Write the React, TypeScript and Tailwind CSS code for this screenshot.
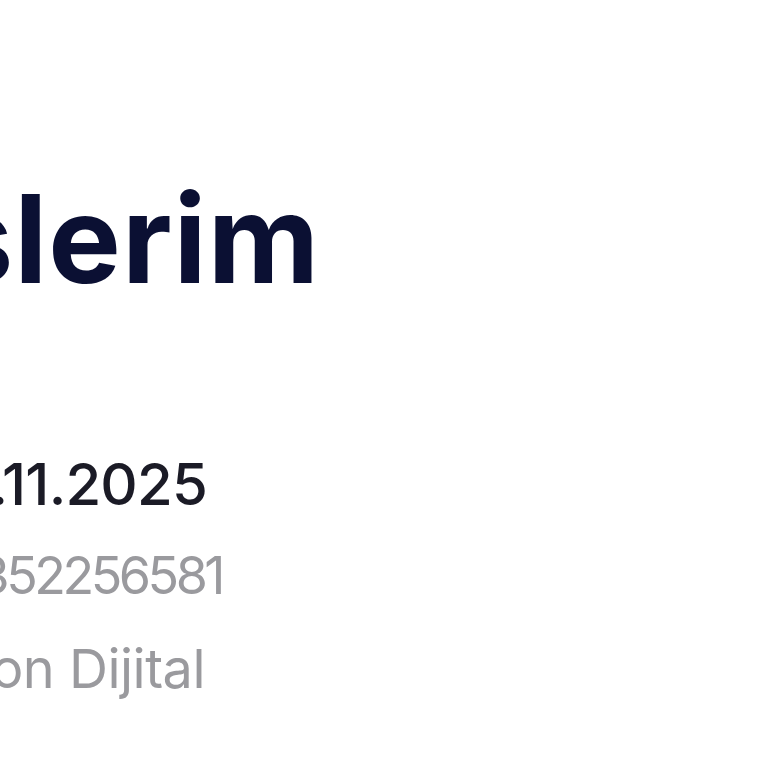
export default function App() {
  return (
    <div className="w-[768px] h-[768px] bg-white overflow-hidden" style={{ fontFamily: "Inter, 'Noto Sans', sans-serif" }}>
      <div className="flex flex-col pt-[178px]">
        <div className="w-[320px] flex justify-end">
          <h1 className="whitespace-nowrap text-[122px] leading-none font-bold text-[#0b1033] tracking-[1px]">Siparişlerim</h1>
        </div>
        <div className="w-[207px] flex justify-end mt-[155px]">
          <span className="whitespace-nowrap text-[58px] leading-none font-medium text-[#1b1b26] tracking-[-0.8px]">Tarih: 12.11.2025</span>
        </div>
        <div className="w-[222px] flex justify-end mt-[37px]">
          <span className="whitespace-nowrap text-[52px] leading-none text-[#9a9a9e] tracking-[-3.5px]">No: 4352256581</span>
        </div>
        <div className="w-[205px] flex justify-end mt-[40px]">
          <span className="whitespace-nowrap text-[54px] leading-none text-[#9a9a9e] tracking-[-0.5px]">Satıcı: Tekon Dijital</span>
        </div>
      </div>
    </div>
  );
}
